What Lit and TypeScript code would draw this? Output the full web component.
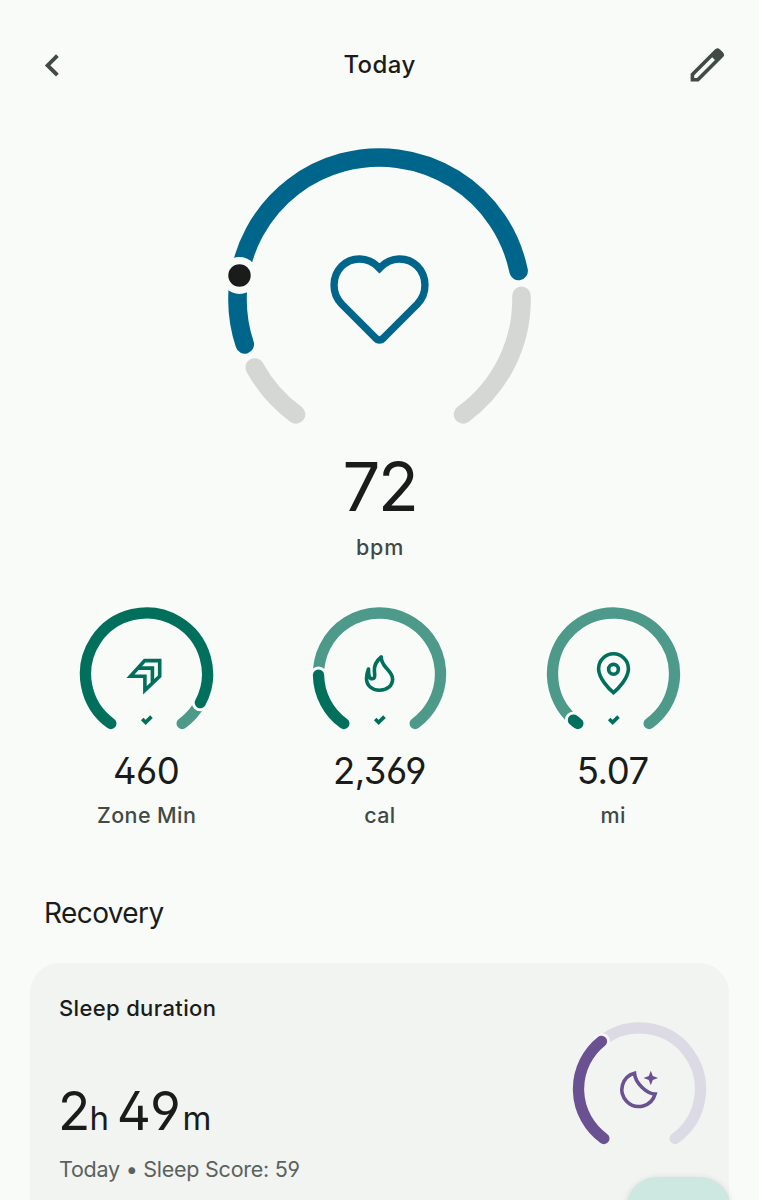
import { LitElement, html, svg, css } from "lit";
import { customElement, property } from "lit/decorators.js";

const point = (r: number, deg: number) => {
  const a = (deg * Math.PI) / 180;
  return { x: r * Math.sin(a), y: -r * Math.cos(a) };
};

// Arc around the origin; angles are degrees clockwise from twelve o'clock.
const arc = (r: number, from: number, to: number) => {
  const a = point(r, from);
  const b = point(r, to);
  return `M${a.x} ${a.y}A${r} ${r} 0 ${to - from > 180 ? 1 : 0} 1 ${b.x} ${b.y}`;
};

const icons: Record<string, unknown> = {
  zone: svg`<path d="M-16 2.200L-1.800 -13.400H13.200V2.200L-1.600 16.400V2.200ZM-9.500 -5.900H5.900V10"/>`,
  flame: svg`<path stroke-linejoin="round" d="M1.700 -17C1.200 -7 13.100 -3.500 13.100 5C13.100 12 7.500 16.200 0 16.200C-7.500 16.200 -13 11.600 -13 4.500C-13 1 -12.200 -2 -11 -5C-11 1 -10.200 4.800 -7.500 4.800C-3.800 4.800 -4.900 .5 -5.100 -3C-5.500 -9.500 -2 -14 1.700 -17Z"/>`,
  pin: svg`<path d="M0 18.700C-4 15.300 -14.900 4.500 -14.900 -5.300A14.900 14.900 0 0 1 14.900 -5.300C14.900 4.500 4 15.300 0 18.700Z"/><circle cy="-4.700" r="4.900"/>`,
  moon: svg`<path d="M-5 -15.800A16.900 16.900 0 1 0 15.600 5C8 5 -4.500 -5.500 -5 -15.800Z"/><path class="solid" d="M11.300 -18.300L13.300 -13L18.600 -11L13.300 -9L11.300 -3.700L9.300 -9L4 -11L9.300 -13Z"/>`,
};

@customElement("ring-gauge")
export class RingGauge extends LitElement {
  @property() icon = "zone";
  @property({ type: Number }) end = 0;
  @property({ type: Boolean }) done = false;

  static styles = css`
    :host { display: block; width: 139px; height: 130px; }
    svg { display: block; }
    path, circle { fill: none; }
    .track, .bar { stroke-width: 11.3; stroke-linecap: round; }
    .track { stroke: var(--track, #4d998a); }
    .bar { stroke: var(--accent, #006f5c); }
    .halo { fill: var(--halo, #f9fbf8); }
    .icon { stroke: var(--accent, #006f5c); stroke-width: 3.6; }
    .icon .solid { fill: var(--accent, #006f5c); stroke: none; }
  `;

  render() {
    const tip = point(61, this.end);
    return html`<svg width="139" height="130" viewBox="-69.5 -74 139 130">
      <path class="track" d=${arc(61, this.end, 144.2)}></path>
      <circle class="halo" cx=${tip.x} cy=${tip.y} r="8.600"></circle>
      <path class="bar" d=${arc(61, -144.2, this.end)}></path>
      <g class="icon">
        ${icons[this.icon]}
        ${this.done ? svg`<path d="M-4.300 45L-.9 48.400L5 42.600"/>` : null}
      </g>
    </svg>`;
  }
}

@customElement("app-root")
export class AppRoot extends LitElement {
  static styles = css`
    :host {
      display: block;
      position: relative;
      height: 1200px;
      overflow: hidden;
      background: #f9fbf8;
      color: #1a1c1b;
      font-family: Inter, "Open Sans", sans-serif;
      font-feature-settings: "ss01", "cv03", "cv04";
    }
    * { box-sizing: border-box; }
    svg { display: block; }
    header {
      display: grid;
      grid-template-columns: 36px 1fr 36px;
      align-items: center;
      height: 130px;
      padding: 0 34px 0 34px;
    }
    h1, h2, h3, p { margin: 0; }
    h1 { font-size: 24px; font-weight: 500; line-height: 32px; text-align: center; letter-spacing: 0.4px; }
    .glyph { fill: none; stroke: #414a44; stroke-width: 3.9; }
    .pencil { fill: #414a44; fill-rule: evenodd; }
    .heart { display: flex; flex-direction: column; align-items: center; padding-top: 10px; }
    .heart path { fill: none; stroke-linecap: round; stroke-width: 18.6; }
    .heart .rest { stroke: #d5d7d4; }
    .heart .live { stroke: #00658b; }
    .heart .outline { stroke: #00658b; stroke-width: 7.4; stroke-linecap: butt; }
    .heart .halo { fill: #f9fbf8; }
    .heart .dot { fill: #1a1c1b; }
    .rate { margin-top: 17px; font-size: 67px; line-height: 60px; letter-spacing: -2.500px; }
    .unit { color: #414a44; font-size: 21.500px; font-weight: 500; line-height: 28px; letter-spacing: 0.4px; }
    .heart .unit { margin-top: 16px; letter-spacing: 0.8px; padding-left: 1px; }
    .stats { display: grid; grid-template-columns: repeat(3, 233.300px); padding: 39px 30px 0; }
    .stat { display: flex; flex-direction: column; align-items: center; }
    .value { margin-top: 21px; font-size: 36.500px; line-height: 40px; letter-spacing: -0.5px; padding-right: 1px; }
    .stat .unit { margin-top: 10px; }
    h2 { margin: 66px 0 0 44px; font-size: 28px; font-weight: 400; line-height: 36px; letter-spacing: -0.6px; }
    .card {
      display: flex;
      justify-content: space-between;
      height: 300px;
      margin: 32px 30px 0;
      padding: 31px 20px 0 29px;
      border-radius: 30px;
      background: #f1f4f1;
      --accent: #6a5192;
      --track: #dcdae4;
      --halo: #f6f6f9;
    }
    h3 { font-size: 22px; font-weight: 500; line-height: 28px; letter-spacing: 0.35px; }
    .duration { margin: 59px 0 0 -1px; font-size: 53px; line-height: 60px; white-space: nowrap; letter-spacing: 1.200px; word-spacing: -9px; }
    .duration small { font-size: 33px; letter-spacing: 0.5px; margin-left: -2px; }
    .duration small:last-child { margin-left: 0.5px; }
    .note { margin-top: 7px; color: #5a625d; font-size: 21.500px; line-height: 28px; letter-spacing: -0.25px; }
    .card ring-gauge { margin-top: 21px; }
    .fab {
      position: absolute;
      left: 627px;
      top: 1177px;
      width: 103px;
      height: 103px;
      border-radius: 30px;
      background: #cde8e0;
      box-shadow: 0 2px 7px rgba(0, 0, 0, 0.16);
    }
  `;

  private stats = [
    { icon: "zone", end: 118, value: "460", unit: "Zone Min" },
    { icon: "flame", end: -91, value: "2,369", unit: "cal" },
    { icon: "pin", end: -139, value: "5.07", unit: "mi" },
  ];

  render() {
    return html`
      <header>
        <svg width="36" height="36" viewBox="0 0 36 36"><path class="glyph" d="M23.400 8.600L13.600 18.400L23.400 28.200"></path></svg>
        <h1>Today</h1>
        <svg width="36" height="36" viewBox="0 0 36 36"><path class="pencil" d="M1.600 34.600V26.800L25.600 2.800Q28.200 0 31 2.400L33.600 5Q36.600 8 33.600 10.600L9.600 34.600ZM5.200 31H8L26 13L23.200 10.200L5.200 28.200Z"></path></svg>
      </header>
      <section class="heart">
        <svg width="319" height="300" viewBox="-159.5 -159.5 319 300">
          <path class="rest" d=${arc(142, -144, -118.600)}></path>
          <path class="rest" d=${arc(142, 88.500, 144)}></path>
          <path class="live" d=${arc(142, -108.400, 78.400)}></path>
          <circle class="halo" cx="-140" cy="-24" r="18.500"></circle>
          <circle class="dot" cx="-140" cy="-24" r="11.200"></circle>
          <path class="outline" d="M0 -31.200L-1.400 -32.600C-11.500 -42.800 -27.600 -43.300 -37.800 -33.300C-48 -22.900 -48 -6.200 -37.900 4.500L-4.200 38.200Q0 42.800 4.200 38.200L37.900 4.500C48 -6.200 48 -22.900 37.800 -33.300C27.600 -43.300 11.500 -42.800 1.400 -32.600Z"></path>
        </svg>
        <p class="rate">72</p>
        <p class="unit">bpm</p>
      </section>
      <section class="stats">
        ${this.stats.map(
          (s) => html`<div class="stat">
            <ring-gauge icon=${s.icon} .end=${s.end} done></ring-gauge>
            <p class="value">${s.value}</p>
            <p class="unit">${s.unit}</p>
          </div>`
        )}
      </section>
      <h2>Recovery</h2>
      <section class="card">
        <div>
          <h3>Sleep duration</h3>
          <p class="duration">2<small>h</small> 49<small>m</small></p>
          <p class="note">Today • Sleep Score: 59</p>
        </div>
        <ring-gauge icon="moon" .end=${-38.600}></ring-gauge>
      </section>
      <div class="fab"></div>
    `;
  }
}
